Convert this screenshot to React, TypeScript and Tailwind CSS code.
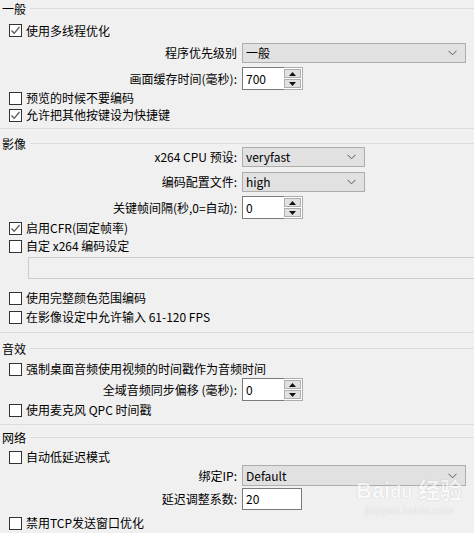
import React from "react";

const font = { fontFamily: '"Noto Sans CJK SC", "Noto Sans", sans-serif' };

function Check({ checked, label, className = "" }: { checked?: boolean; label: React.ReactNode; className?: string }) {
  return (
    <div className={`flex items-center h-[16px] pl-[9px] ${className}`}>
      <span className="w-[13px] h-[13px] border border-[#333] bg-white flex items-center justify-center shrink-0">
        {checked && (
          <svg width="11" height="11" viewBox="0 0 11 11">
            <path d="M1.5 5.5 L4.2 8.3 L9.5 2" fill="none" stroke="#5a5a5a" strokeWidth="1.3" />
          </svg>
        )}
      </span>
      <span className="ml-[4px] text-[12px] leading-none text-black whitespace-nowrap">{label}</span>
    </div>
  );
}

function Header({ title, className = "" }: { title: string; className?: string }) {
  return (
    <div className={`flex items-center h-[7px] ${className}`}>
      <span className="text-[12px] leading-none pl-[2px] pr-[4px] text-black">{title}</span>
      <div className="flex-1 h-px bg-[#dcdcdc]" />
    </div>
  );
}

function Label({ children }: { children: React.ReactNode }) {
  return (
    <span className="w-[237px] text-right text-[12px] leading-none text-black whitespace-nowrap shrink-0">
      {children}
    </span>
  );
}

function Select({ value, w, h = "h-[20px]" }: { value: string; w: string; h?: string }) {
  return (
    <div className={`ml-[5px] ${w} ${h} bg-[#e1e1e1] border border-[#adadad] flex items-center pl-[3px] pr-[8px]`}>
      <span className="flex-1 text-[12px] leading-none text-black">{value}</span>
      <svg width="9" height="6" viewBox="0 0 9 6">
        <path d="M0.5 0.8 L4.5 4.8 L8.5 0.8" fill="none" stroke="#555" strokeWidth="1" />
      </svg>
    </div>
  );
}

function Spin({ value }: { value: string }) {
  return (
    <div className="ml-[5px] flex h-[23px] w-[61px]">
      <div className="w-[42px] h-full bg-white border border-[#7a7a7a] border-r-0 flex items-center pl-[3px]">
        <span className="text-[12px] leading-none text-black">{value}</span>
      </div>
      <div className="flex-1 h-full bg-white border border-[#adadad] border-l-0 flex flex-col justify-center gap-px py-[1px] pr-[1px]">
        <div className="flex-1 bg-[#e1e1e1] border border-[#adadad] flex items-center justify-center">
          <svg width="7" height="4" viewBox="0 0 7 4"><path d="M0 4 L3.5 0 L7 4 Z" fill="#111" /></svg>
        </div>
        <div className="flex-1 bg-[#e1e1e1] border border-[#adadad] flex items-center justify-center">
          <svg width="7" height="4" viewBox="0 0 7 4"><path d="M0 0 L3.5 4 L7 0 Z" fill="#111" /></svg>
        </div>
      </div>
    </div>
  );
}

export default function App() {
  return (
    <div className="relative w-[474px] h-[533px] bg-[#f0f0f0] overflow-hidden" style={font}>
      {/* 一般 */}
      <div className="pt-[5px] pb-[5px] border-b border-[#dcdcdc]">
        <Header title="一般" />
        <Check checked label="使用多线程优化" className="mt-[10px] h-[17px]" />
        <div className="flex items-center mt-[4px]">
          <Label>程序优先级别</Label>
          <Select value="一般" w="w-[224px]" />
        </div>
        <div className="flex items-center mt-[4px]">
          <Label>画面缓存时间(毫秒):</Label>
          <Spin value="700" />
        </div>
        <Check label="预览的时候不要编码" />
        <Check checked label="允许把其他按键设为快捷键" className="mt-[1px]" />
      </div>

      {/* 影像 */}
      <div className="pt-[11px] pb-[7px] border-b border-[#dcdcdc]">
        <Header title="影像" />
        <div className="flex items-center">
          <Label>x264 CPU 预设:</Label>
          <Select value="veryfast" w="w-[123px]" />
        </div>
        <div className="flex items-center mt-[5px]">
          <Label>编码配置文件:</Label>
          <Select value="high" w="w-[123px]" />
        </div>
        <div className="flex items-center mt-[4px]">
          <Label>关键帧间隔(秒,0=自动):</Label>
          <Spin value="0" />
        </div>
        <Check checked label="启用CFR(固定帧率)" className="mt-[1px]" />
        <Check label="自定 x264 编码设定" className="mt-[2px]" />
        <div className="mt-[3px] ml-[28px] -mr-[6px] h-[22px] border border-[#cccccc] bg-[#f0f0f0]" />
        <Check label="使用完整颜色范围编码" className="mt-[11px]" />
        <Check label="在影像设定中允许输入 61-120 FPS" className="mt-[3px]" />
      </div>

      {/* 音效 */}
      <div className="pt-[12px] pb-[6px] border-b border-[#dcdcdc]">
        <Header title="音效" />
        <Check label="强制桌面音频使用视频的时间戳作为音频时间" className="mt-[9px]" />
        <div className="flex items-center mt-[1px]">
          <Label>全域音频同步偏移 (毫秒):</Label>
          <Spin value="0" />
        </div>
        <Check label="使用麦克风 QPC 时间戳" className="mt-[1px]" />
      </div>

      {/* 网络 */}
      <div className="pt-[9px]">
        <Header title="网络" />
        <Check label="自动低延迟模式" className="mt-[8px] h-[15px]" />
        <div className="flex items-center">
          <Label>绑定IP:</Label>
          <Select value="Default" w="w-[224px]" h="h-[21px]" />
        </div>
        <div className="flex items-center mt-[2px]">
          <Label>延迟调整系数:</Label>
          <div className="ml-[5px] w-[60px] h-[22px] bg-white border border-[#7a7a7a] flex items-center pl-[3px]">
            <span className="text-[12px] leading-none text-black">20</span>
          </div>
        </div>
        <Check label="禁用TCP发送窗口优化" className="mt-[5px]" />
      </div>

      {/* watermark */}
      <div className="absolute left-[356px] top-[480px] flex flex-col items-center pointer-events-none opacity-60">
        <span className="text-[22px] font-bold leading-none text-white [text-shadow:0_0_1px_#9a9a9a]" style={{ fontFamily: '"Liberation Sans", "Noto Sans CJK SC", sans-serif' }}>
          Bai<span className="text-[18px]">du</span> 经验
        </span>
        <span className="mt-[3px] text-[11px] leading-none text-white [text-shadow:0_0_1px_#9a9a9a]" style={{ fontFamily: '"Liberation Sans", sans-serif' }}>
          jingyan.baidu.com
        </span>
      </div>
    </div>
  );
}
